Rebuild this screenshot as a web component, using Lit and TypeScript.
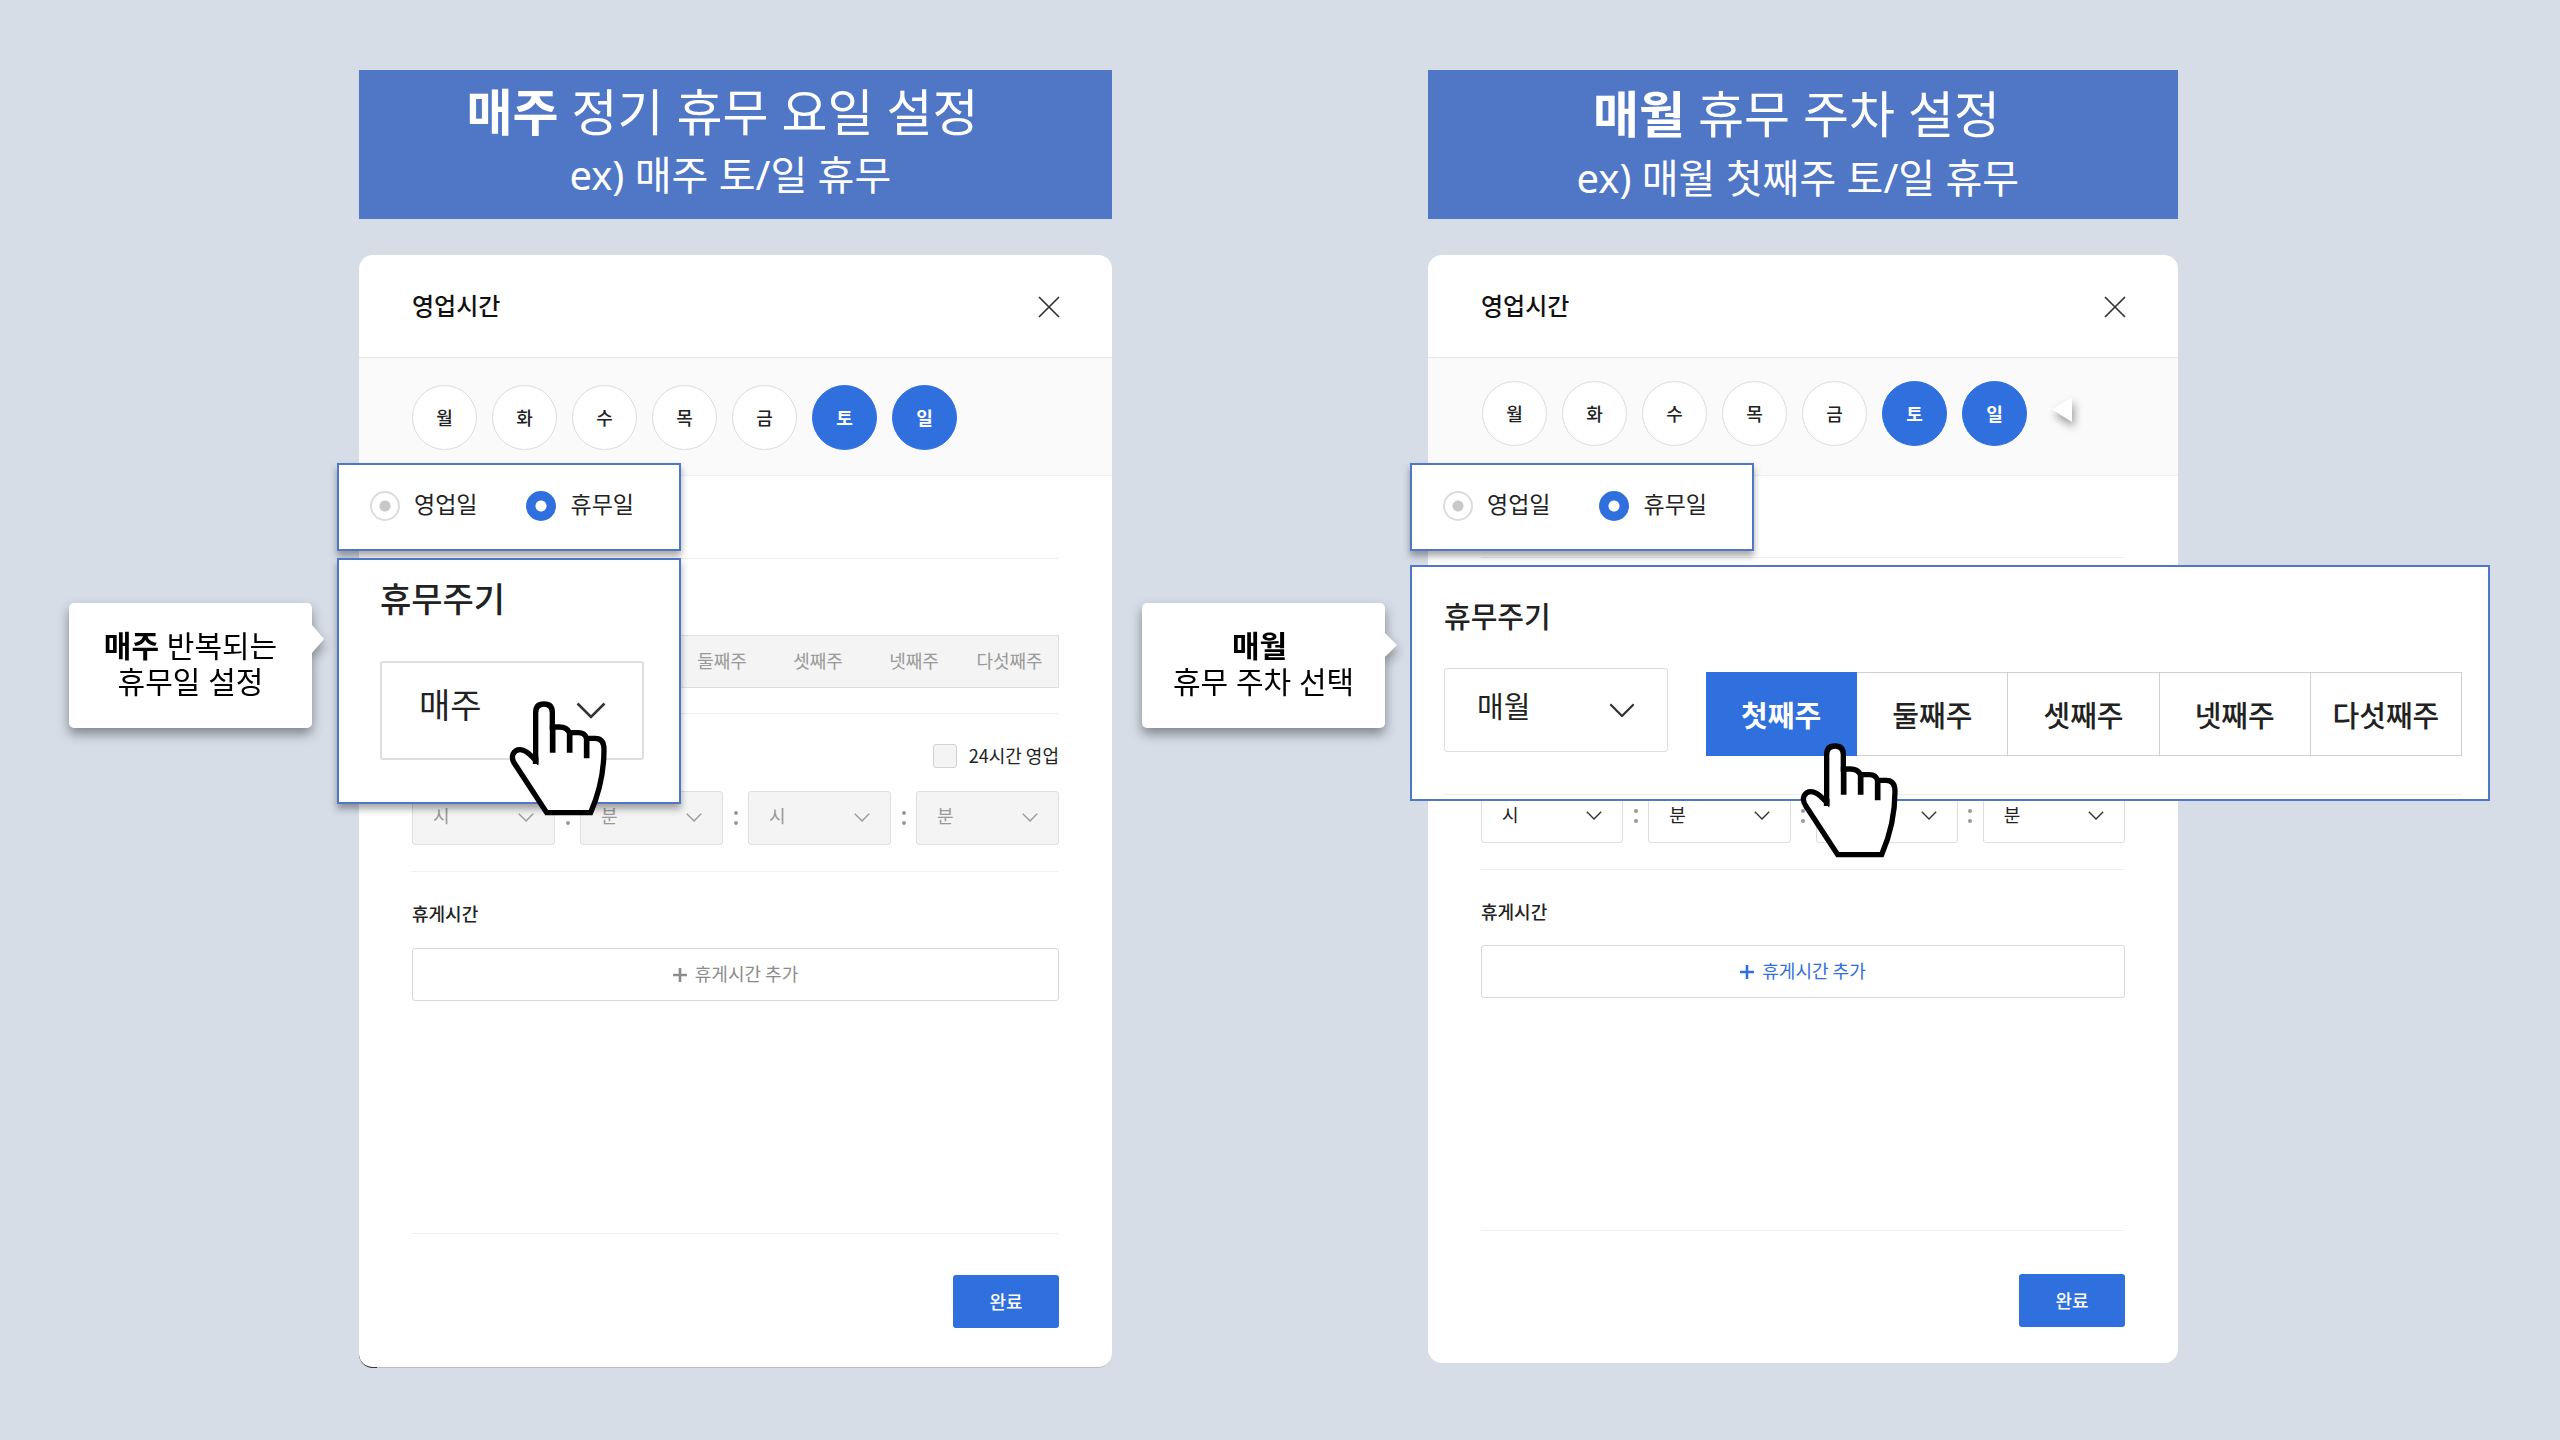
import { LitElement, html, css, svg } from "lit";
import { customElement, property } from "lit/decorators.js";
import { classMap } from "lit/directives/class-map.js";

const DAYS = ["월", "화", "수", "목", "금", "토", "일"];
const CLOSED_DAYS = ["토", "일"];
const WEEKS = ["첫째주", "둘째주", "셋째주", "넷째주", "다섯째주"];
const TIME_UNITS = ["시", "분", "시", "분"];

const base = css`
  *,
  *::before,
  *::after {
    box-sizing: border-box;
  }
  button,
  select,
  input {
    font: inherit;
    color: inherit;
    margin: 0;
    padding: 0;
  }
  h1,
  h2,
  h3,
  p {
    margin: 0;
    font-size: inherit;
    font-weight: inherit;
  }
  svg {
    display: block;
  }
`;

const chevron = svg`<path d="M1.5 1.5 L15 15 L28.5 1.5" fill="none" stroke="currentColor" stroke-width="2.6"/>`;

/** Drop-down with a thin chevron laid in the same grid cell. */
@customElement("pick-box")
export class PickBox extends LitElement {
  @property() value = "";
  @property() label = "";
  @property({ type: Boolean }) disabled = false;

  static styles = [
    base,
    css`
      :host {
        display: grid;
        align-items: center;
      }
      .field,
      .chevron {
        grid-area: 1 / 1;
      }
      .field {
        appearance: none;
        width: 100%;
        height: 100%;
        border: var(--pick-border, 1px) solid #dedede;
        border-radius: 3px;
        background: #fff;
        padding: 0 0 var(--pick-lift, 4px) var(--pick-pad, 20px);
        opacity: 1;
      }
      .field:disabled {
        background: #f4f4f4;
        color: #999;
      }
      .chevron {
        justify-self: end;
        width: var(--pick-chevron, 16px);
        margin-right: var(--pick-end, 21px);
        pointer-events: none;
        color: #333;
      }
      .chevron.off {
        color: #999;
      }
    `,
  ];

  render() {
    return html`
      <select class="field" aria-label=${this.label} ?disabled=${this.disabled}>
        <option>${this.value}</option>
      </select>
      <svg class="chevron ${this.disabled ? "off" : ""}" viewBox="0 0 30 17">${chevron}</svg>
    `;
  }
}

/** White sheet with the opening-hours form. */
@customElement("hours-sheet")
export class HoursSheet extends LitElement {
  @property({ type: Boolean, reflect: true }) locked = false;

  static styles = [
    base,
    css`
      :host {
        --days-top: 23px;
        --days-start: 54px;
        --kind-height: 82px;
        --cycle-height: 153px;
        --time-top: 78px;
        --rest-gap: 22px;
        --rest-height: 361px;
        --done-top: 43px;
        --done-bottom: 36px;
        display: block;
        position: relative;
        background: #fff;
        border-radius: 14px;
        font-size: 18px;
        line-height: 24px;
        color: #222;
      }
      :host([locked]) {
        --days-top: 27px;
        --days-start: 53px;
        --kind-height: 83px;
        --cycle-height: 155px;
        --rest-gap: 23px;
        --rest-height: 362px;
        --done-top: 41px;
        --done-bottom: 39px;
        --pick-lift: 6px;
        border-bottom: 1px solid #b9bcc1;
      }
      :host([locked])::after {
        content: "";
        position: absolute;
        left: 0;
        bottom: -1px;
        width: 18px;
        height: 14px;
        border-bottom: 1px solid #333;
        border-bottom-left-radius: 14px;
      }
      .head {
        display: flex;
        align-items: center;
        justify-content: space-between;
        height: 103px;
        padding: 0 52px 0 53px;
        border-bottom: 1px solid #e6e6e6;
      }
      .title {
        margin-bottom: 2px;
        font-size: 24px;
        line-height: 36px;
        font-weight: 500;
        color: #111;
      }
      .close {
        margin-top: 2px;
        border: 0;
        background: none;
        width: 22px;
        height: 22px;
      }
      .days {
        display: flex;
        gap: 15px;
        height: 118px;
        padding: var(--days-top) 53px 0 var(--days-start);
        background: #fafafa;
        border-bottom: 1px solid #f0f0f0;
      }
      .day {
        width: 65px;
        height: 65px;
        padding-bottom: 2px;
        border-radius: 50%;
        border: 1px solid #dcdcdc;
        background: #fff;
        font-weight: 500;
      }
      .day.on {
        background: #306fde;
        border-color: #306fde;
        color: #fff;
        font-weight: 700;
      }
      .part {
        margin: 0 53px;
        border-bottom: 1px solid #efefef;
      }
      .kind {
        height: var(--kind-height);
      }
      .cycle {
        height: var(--cycle-height);
        padding-top: 76px;
      }
      .weeks {
        display: flex;
        justify-content: flex-end;
      }
      .week {
        width: 96px;
        height: 53px;
        padding: 0 2px 4px 0;
        border: 1px solid #ddd;
        border-width: 1px 0;
        background: #f4f4f4;
        color: #999;
      }
      .week:last-child {
        border-right-width: 1px;
      }
      .time {
        padding: 30px 0 26px;
      }
      :host(:not([locked])) .time {
        padding-top: var(--time-top);
      }
      .all-day {
        display: flex;
        align-items: center;
        justify-content: flex-end;
        gap: 12px;
        height: 24px;
        margin-bottom: 23px;
      }
      .all-day-name {
        margin-bottom: 2px;
      }
      .tick {
        appearance: none;
        width: 24px;
        height: 24px;
        border: 1px solid #d2d2d2;
        border-radius: 3px;
        background: #f4f4f4;
      }
      .clock {
        display: grid;
        grid-template-columns: 1fr 25px 1fr 25px 1fr 25px 1fr;
        height: 54px;
      }
      .colon {
        align-self: center;
        justify-self: center;
        color: #999;
        width: 4px;
      }
      .rest {
        min-height: var(--rest-height);
        padding-top: 29px;
      }
      .rest-title {
        font-weight: 500;
        margin-bottom: var(--rest-gap);
      }
      .add {
        display: flex;
        align-items: center;
        justify-content: center;
        gap: 8px;
        width: 100%;
        height: 53px;
        padding-bottom: 3px;
        border: 1px solid #d8d8d8;
        border-radius: 3px;
        background: #fff;
        color: #306fde;
      }
      :host([locked]) .add {
        color: #8c8c8c;
      }
      .plus {
        margin-top: 4px;
      }
      .foot {
        display: flex;
        justify-content: flex-end;
        padding: var(--done-top) 53px var(--done-bottom);
      }
      .done {
        width: 106px;
        height: 53px;
        padding-bottom: 2px;
        border: 0;
        border-radius: 3px;
        background: #306fde;
        color: #fff;
        font-weight: 500;
      }
    `,
  ];

  render() {
    return html`
      <header class="head">
        <h2 class="title">영업시간</h2>
        <button class="close" aria-label="닫기">
          <svg width="22" height="22" viewBox="0 0 22 22">
            <path d="M1 1 L21 21 M21 1 L1 21" stroke="#333" stroke-width="1.7" />
          </svg>
        </button>
      </header>
      <div class="days">
        ${DAYS.map((day) => {
          const on = CLOSED_DAYS.includes(day);
          return html`<button class=${classMap({ day: true, on })} aria-pressed=${on}>${day}</button>`;
        })}
      </div>
      <div class="part kind"></div>
      ${this.locked
        ? html`<div class="part cycle">
            <div class="weeks">
              ${WEEKS.slice(1).map((week) => html`<button class="week" disabled>${week}</button>`)}
            </div>
          </div>`
        : html`<div class="part cycle"></div>`}
      <div class="part time">
        ${this.locked
          ? html`<label class="all-day"
              ><input class="tick" type="checkbox" disabled /><span class="all-day-name">24시간 영업</span></label
            >`
          : null}
        <div class="clock">
          ${TIME_UNITS.map(
            (unit, i) => html`
              ${i
                ? html`<svg class="colon" viewBox="0 0 4 14">
                    <circle cx="2" cy="2" r="2" fill="currentColor" />
                    <circle cx="2" cy="12" r="2" fill="currentColor" />
                  </svg>`
                : null}
              <pick-box value=${unit} label=${unit} ?disabled=${this.locked}></pick-box>
            `
          )}
        </div>
      </div>
      <div class="part rest">
        <h3 class="rest-title">휴게시간</h3>
        <button class="add" ?disabled=${this.locked}>
          <svg class="plus" width="14" height="14" viewBox="0 0 14 14">
            <path d="M7 0 V14 M0 7 H14" stroke="currentColor" stroke-width="2.6" />
          </svg>
          휴게시간 추가
        </button>
      </div>
      <footer class="foot"><button class="done">완료</button></footer>
    `;
  }
}

@customElement("app-root")
export class AppRoot extends LitElement {
  static styles = [
    base,
    css`
      :host {
        display: block;
        min-height: 100vh;
        padding: 70px 0 64px;
        background: #d6dde7;
        font-family: "Noto Sans CJK KR", "Noto Sans", sans-serif;
        color: #222;
        box-sizing: border-box;
        overflow-x: hidden;
      }
      .board {
        display: grid;
        grid-template-columns: minmax(0, 753fr) minmax(0, 750fr);
        column-gap: 316px;
        padding: 0 382px 0 359px;
        align-items: start;
      }
      .guide {
        position: relative;
      }
      .banner,
      .tip {
        font-family: "Noto Sans", "Noto Sans CJK KR", sans-serif;
      }
      .banner {
        height: 149px;
        margin-bottom: 36px;
        padding-top: 8px;
        background: #4f77c6;
        color: #fff;
        text-align: center;
      }
      .monthly .banner {
        padding-top: 10px;
      }
      .banner-title {
        font-size: 50px;
        line-height: 68px;
        white-space: pre;
      }
      .banner-example {
        font-size: 40px;
        line-height: 58px;
        white-space: pre;
      }
      .monthly .banner-example {
        line-height: 60px;
      }
      .strong {
        font-weight: 700;
      }
      .callout {
        position: absolute;
        background: #fff;
        border: 2px solid #4f77c6;
      }
      .lifted {
        box-shadow: 0 5px 7px rgba(0, 0, 0, 0.35);
      }
      .kinds {
        top: 393px;
        left: -22px;
        display: flex;
        gap: 49px;
        width: 344px;
        height: 88px;
        padding: 26px 31px;
        font-size: 23px;
        line-height: 30px;
      }
      .monthly .kinds,
      .monthly .cycle {
        left: -18px;
      }
      .choice {
        display: flex;
        gap: 14px;
        height: 30px;
        white-space: nowrap;
      }
      .choice-name {
        margin-top: -3px;
      }
      .dot {
        appearance: none;
        flex: none;
        width: 30px;
        height: 30px;
        border: 2px solid #dcdcdc;
        border-radius: 50%;
        background: radial-gradient(circle, #c8c8c8 5px, #fff 6px);
      }
      .dot:checked {
        border-color: #306fde;
        background: radial-gradient(circle, #fff 5px, #306fde 6px);
      }
      .weekly .cycle {
        top: 488px;
        left: -22px;
        width: 344px;
        height: 246px;
        padding: 14px 35px 0 41px;
      }
      .monthly .cycle {
        top: 495px;
        width: 1080px;
        height: 236px;
        padding: 26px 26px 0 32px;
      }
      .cycle-title {
        font-weight: 500;
      }
      .weekly .cycle-title {
        font-size: 34px;
        line-height: 48px;
        margin-bottom: 39px;
      }
      .monthly .cycle-title {
        font-size: 29px;
        line-height: 44px;
        margin-bottom: 31px;
      }
      .weekly .cycle-pick {
        height: 99px;
        font-size: 34px;
        --pick-border: 2px;
        --pick-pad: 37px;
        --pick-lift: 15px;
        --pick-chevron: 30px;
        --pick-end: 38px;
      }
      .cycle-row {
        display: grid;
        grid-template-columns: 224px minmax(0, 1fr);
        gap: 38px;
        height: 88px;
      }
      .monthly .cycle-pick {
        height: 84px;
        font-size: 29px;
        --pick-pad: 32px;
        --pick-lift: 11px;
        --pick-chevron: 26px;
        --pick-end: 33px;
      }
      .weeks {
        display: grid;
        grid-template-columns: repeat(5, minmax(0, 1fr));
        height: 84px;
        margin-top: 4px;
      }
      .week {
        border: 1px solid #cfcfcf;
        border-left-width: 0;
        background: #fff;
        font-size: 29px;
        font-weight: 500;
        white-space: nowrap;
      }
      .week.on {
        border-color: #306fde;
        background: #306fde;
        color: #fff;
        font-weight: 700;
      }
      .rule {
        height: 1px;
        margin-top: 38px;
        background: #ededed;
      }
      .tip {
        position: absolute;
        top: 533px;
        width: 243px;
        height: 125px;
        padding-top: 25px;
        border-radius: 5px;
        background: #fff;
        color: #000;
        font-size: 30px;
        line-height: 36px;
        text-align: center;
        white-space: pre;
        filter: drop-shadow(0 6px 6px rgba(0, 0, 0, 0.4));
      }
      .tip::after {
        content: "";
        position: absolute;
        left: 100%;
        width: 12px;
        background: #fff;
        clip-path: polygon(0 0, 100% 50%, 0 100%);
      }
      .weekly .tip {
        left: -290px;
      }
      .weekly .tip::after {
        top: 22px;
        height: 28px;
      }
      .monthly .tip {
        left: -286px;
      }
      .monthly .tip::after {
        top: 30px;
        height: 24px;
      }
      .pointer {
        position: absolute;
        width: 100px;
        height: 116px;
        pointer-events: none;
      }
      .weekly .pointer {
        top: 630px;
        left: 149px;
      }
      .monthly .pointer {
        top: 672px;
        left: 371px;
      }
      .marker {
        position: absolute;
        top: 327px;
        left: 624px;
        filter: drop-shadow(2px 5px 4px rgba(0, 0, 0, 0.4));
      }
    `,
  ];

  private pointer() {
    return html`<svg class="pointer" viewBox="54 60 300 348" aria-hidden="true">
      <path
        d="M137 240 V98 Q137 72 162 72 Q187 72 187 98 V141 H208 Q230 141 239 158 H265 Q284 158 290 175 H315 Q342 175 342 208 C342 280 325 345 302 398 H170 L75 253 C58 228 72 209 90 209 C112 209 124 230 137 240 Z"
        fill="#fff"
        stroke="#000"
        stroke-width="16"
      />
      <path
        d="M137 230 V252 M188 135 V218 M239 155 V218 M290 172 V235"
        fill="none"
        stroke="#000"
        stroke-width="17"
      />
    </svg>`;
  }

  private kinds(name: string) {
    return html`<div class="callout lifted kinds">
      <label class="choice"><input class="dot" type="radio" name=${name} /><span class="choice-name">영업일</span></label>
      <label class="choice"><input class="dot" type="radio" name=${name} checked /><span class="choice-name">휴무일</span></label>
    </div>`;
  }

  render() {
    return html`
      <main class="board">
        <section class="guide weekly">
          <div class="banner">
            <h1 class="banner-title"><span class="strong">매주</span> 정기 휴무 요일 설정${"  "}</h1>
            <p class="banner-example">ex) 매주 토/일 휴무${" "}</p>
          </div>
          <hours-sheet locked></hours-sheet>
          ${this.kinds("weekly-kind")}
          <div class="callout lifted cycle">
            <h3 class="cycle-title">휴무주기</h3>
            <pick-box class="cycle-pick" value="매주" label="휴무주기"></pick-box>
          </div>
          <p class="tip"><span class="strong">매주</span> 반복되는<br />휴무일 설정</p>
          ${this.pointer()}
        </section>
        <section class="guide monthly">
          <div class="banner">
            <h1 class="banner-title"><span class="strong">매월</span> 휴무 주차 설정${" "}</h1>
            <p class="banner-example">ex) 매월 첫째주 토/일 휴무${" "}</p>
          </div>
          <hours-sheet></hours-sheet>
          <svg class="marker" width="20" height="25" viewBox="0 0 20 25" aria-hidden="true">
            <path d="M20 0 V25 L0 12.5 Z" fill="#fff" />
          </svg>
          ${this.kinds("monthly-kind")}
          <div class="callout cycle">
            <h3 class="cycle-title">휴무주기</h3>
            <div class="cycle-row">
              <pick-box class="cycle-pick" value="매월" label="휴무주기"></pick-box>
              <div class="weeks">
                ${WEEKS.map(
                  (week, i) =>
                    html`<button class=${classMap({ week: true, on: i === 0 })} aria-pressed=${i === 0}>${week}</button>`
                )}
              </div>
            </div>
            <div class="rule"></div>
          </div>
          <p class="tip"><span class="strong">매월</span> <br />휴무 주차 선택</p>
          ${this.pointer()}
        </section>
      </main>
    `;
  }
}
